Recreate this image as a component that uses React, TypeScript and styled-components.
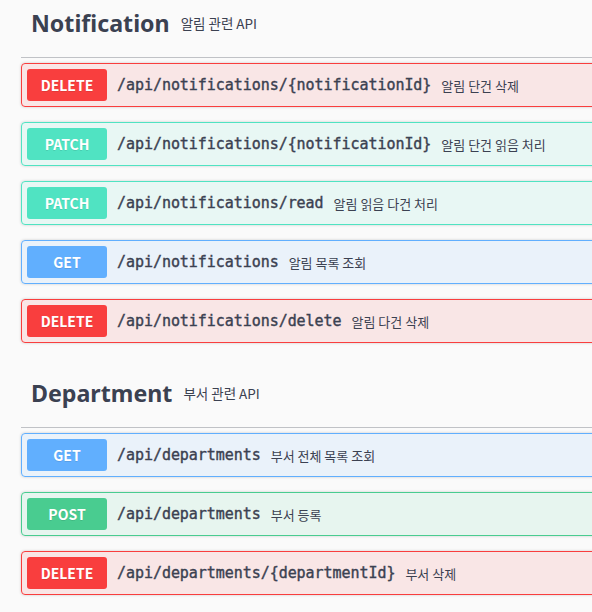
import React from 'react'
import styled, { createGlobalStyle } from 'styled-components'

type Method = 'get' | 'post' | 'patch' | 'delete'

interface Operation {
  method: Method
  path: string
  summary: string
}

interface Tag {
  name: string
  description: string
  operations: Operation[]
}

const methodColors: Record<Method, string> = {
  get: '#61affe',
  post: '#49cc90',
  patch: '#50e3c2',
  delete: '#f93e3e',
}

const methodBackgrounds: Record<Method, string> = {
  get: 'rgba(97, 175, 254, 0.1)',
  post: 'rgba(73, 204, 144, 0.1)',
  patch: 'rgba(80, 227, 194, 0.1)',
  delete: 'rgba(249, 62, 62, 0.1)',
}

const tags: Tag[] = [
  {
    name: 'Notification',
    description: '알림 관련 API',
    operations: [
      { method: 'delete', path: '/api/notifications/{notificationId}', summary: '알림 단건 삭제' },
      { method: 'patch', path: '/api/notifications/{notificationId}', summary: '알림 단건 읽음 처리' },
      { method: 'patch', path: '/api/notifications/read', summary: '알림 읽음 다건 처리' },
      { method: 'get', path: '/api/notifications', summary: '알림 목록 조회' },
      { method: 'delete', path: '/api/notifications/delete', summary: '알림 다건 삭제' },
    ],
  },
  {
    name: 'Department',
    description: '부서 관련 API',
    operations: [
      { method: 'get', path: '/api/departments', summary: '부서 전체 목록 조회' },
      { method: 'post', path: '/api/departments', summary: '부서 등록' },
      { method: 'delete', path: '/api/departments/{departmentId}', summary: '부서 삭제' },
    ],
  },
]

const GlobalStyle = createGlobalStyle`
  html, body {
    margin: 0;
    padding: 0;
    background: #fafafa;
    overflow: hidden;
  }
  body {
    font-family: "Noto Sans", "Noto Sans CJK KR", sans-serif;
    color: #3b4151;
  }
`

const Page = styled.div`
  width: 760px;
  margin-top: -12px;
  padding-left: 21px;
`

const TagSection = styled.section`
  display: flex;
  flex-direction: column;
`

const TagHeading = styled.h3`
  display: flex;
  align-items: center;
  box-sizing: border-box;
  height: 70px;
  margin: 0 0 5px;
  padding: 1px 20px 0 10px;
  border-bottom: 1px solid rgba(59, 65, 81, 0.3);
  font-family: "Noto Sans", "Noto Sans CJK KR", sans-serif;
  font-size: 23.2px;
  font-weight: 700;
  color: #3b4151;
`

const TagDescription = styled.small`
  padding: 0 10px 0 11px;
  font-family: "Noto Sans CJK KR", sans-serif;
  font-size: 13.5px;
  font-weight: 400;
  color: #3b4151;
`

const OpBlock = styled.div<{ $method: Method }>`
  display: flex;
  align-items: center;
  box-sizing: border-box;
  height: 44px;
  margin: 0 0 15px;
  padding: 5px;
  border: 1px solid ${({ $method }) => methodColors[$method]};
  border-radius: 4px;
  background: ${({ $method }) => methodBackgrounds[$method]};
  box-shadow: 0 0 3px rgba(0, 0, 0, 0.19);
`

const MethodBadge = styled.span<{ $method: Method }>`
  display: flex;
  align-items: center;
  justify-content: center;
  width: 80px;
  height: 32px;
  flex-shrink: 0;
  border-radius: 3px;
  background: ${({ $method }) => methodColors[$method]};
  color: #fff;
  font-family: "Noto Sans CJK KR", "Noto Sans", sans-serif;
  font-size: 14px;
  font-weight: 700;
  text-shadow: 0 1px 0 rgba(0, 0, 0, 0.1);
`

const OpPath = styled.span`
  padding: 0 10px;
  font-family: "DejaVu Sans Mono", monospace;
  font-size: 15px;
  font-weight: 400;
  -webkit-text-stroke: 0.4px #3b4151;
  letter-spacing: -0.05px;
  color: #3b4151;
  white-space: nowrap;
`

const OpSummary = styled.span`
  font-family: "Noto Sans CJK KR", sans-serif;
  font-size: 13px;
  color: #3b4151;
  white-space: nowrap;
`

const App: React.FC = () => (
  <>
    <GlobalStyle />
    <Page>
      {tags.map((tag) => (
        <TagSection key={tag.name}>
          <TagHeading>
            {tag.name}
            <TagDescription>{tag.description}</TagDescription>
          </TagHeading>
          {tag.operations.map((op, i) => (
            <OpBlock key={i} $method={op.method}>
              <MethodBadge $method={op.method}>{op.method.toUpperCase()}</MethodBadge>
              <OpPath>{op.path}</OpPath>
              <OpSummary>{op.summary}</OpSummary>
            </OpBlock>
          ))}
        </TagSection>
      ))}
    </Page>
  </>
)

export default App
